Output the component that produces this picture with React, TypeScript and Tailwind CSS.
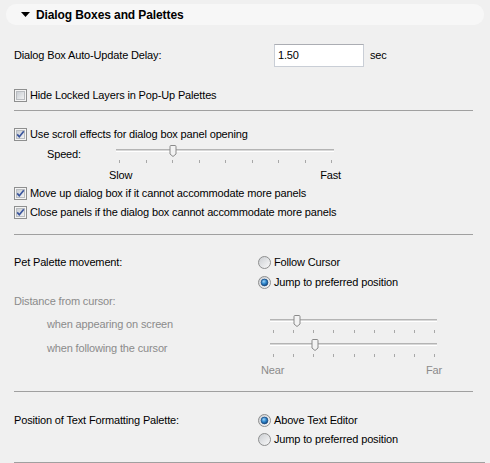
import React from 'react';

function CheckBox({ checked }: { checked?: boolean }) {
  return (
    <svg width="13" height="13" viewBox="0 0 13 13" className="shrink-0">
      <defs>
        <linearGradient id="cbFill" x1="0" y1="0" x2="1" y2="1">
          <stop offset="0" stopColor="#c6cbd1" />
          <stop offset="1" stopColor="#f4f4f4" />
        </linearGradient>
      </defs>
      <rect x="0.5" y="0.5" width="12" height="12" fill="#f4f4f4" stroke="#8e8f8f" />
      <rect x="2.5" y="2.5" width="8" height="8" fill="url(#cbFill)" stroke="#b9bcc0" />
      {checked && (
        <path d="M3.2 6.4 L5.3 8.8 L9.8 3.2" stroke="#3a559d" strokeWidth="1.7" fill="none" />
      )}
    </svg>
  );
}

function Radio({ checked }: { checked?: boolean }) {
  return (
    <svg width="13" height="13" viewBox="0 0 13 13" className="shrink-0">
      <defs>
        <linearGradient id="rdFill" x1="0" y1="0" x2="1" y2="1">
          <stop offset="0" stopColor="#c9ccd0" />
          <stop offset="1" stopColor="#fbfbfb" />
        </linearGradient>
        <radialGradient id="rdDot" cx="0.4" cy="0.35" r="0.7">
          <stop offset="0" stopColor="#9fd3f7" />
          <stop offset="0.5" stopColor="#2d86cc" />
          <stop offset="1" stopColor="#123f73" />
        </radialGradient>
      </defs>
      <circle cx="6.5" cy="6.5" r="6" fill="url(#rdFill)" stroke="#8e8f8f" />
      {checked && <circle cx="6.5" cy="6.5" r="3.4" fill="url(#rdDot)" stroke="#1f4f85" strokeWidth="0.8" />}
    </svg>
  );
}

function Slider({ width, thumb, ticks = 9 }: { width: number; thumb: number; ticks?: number }) {
  const inset = 3;
  const step = (width - inset * 2) / (ticks - 1);
  return (
    <svg width={width} height="19" viewBox={`0 0 ${width} 19`} className="shrink-0">
      <rect x="0" y="4" width={width} height="1" fill="#b4b4b4" />
      <rect x="0" y="5" width={width} height="1" fill="#d8d8d8" />
      <rect x="0" y="6" width={width} height="1" fill="#ffffff" />
      {Array.from({ length: ticks }).map((_, i) => (
        <rect key={i} x={Math.round(inset + i * step)} y="15" width="1" height="3" fill="#a8a8a8" />
      ))}
      <path
        d={`M${thumb - 3} 1.5 Q${thumb - 3} 0.5 ${thumb - 2} 0.5 L${thumb + 2} 0.5 Q${thumb + 3} 0.5 ${thumb + 3} 1.5 L${thumb + 3} 9 L${thumb} 11.5 L${thumb - 3} 9 Z`}
        fill="#f3f3f3"
        stroke="#8a8a8a"
        strokeWidth="1"
      />
    </svg>
  );
}

const Sep = ({ className }: { className: string }) => (
  <div className={`h-px w-[459px] bg-[#a0a0a0] ${className}`} />
);

export default function App() {
  return (
    <div className="w-[490px] h-[463px] bg-[#f0f0f0] overflow-hidden font-['Liberation_Sans',Arial,sans-serif] text-[11px] tracking-[-0.15px] text-black">
      {/* header */}
      <div className="mt-[4px] mx-[6px] h-[21px] rounded-[10px] bg-[#f7f7f7] flex items-center pl-[15px]">
        <svg width="9" height="5" viewBox="0 0 9 5" className="mr-[6px]">
          <path d="M0 0 L9 0 L4.5 5 Z" fill="#000" />
        </svg>
        <span className="font-bold text-[12px] tracking-[-0.1px]">Dialog Boxes and Palettes</span>
      </div>

      <div className="pl-[14px]">
        {/* delay */}
        <div className="mt-[19px] h-[23px] flex items-center">
          <span className="w-[260px]">Dialog Box Auto-Update Delay:</span>
          <div className="w-[90px] h-[23px] bg-white border border-[#c9ced6] border-t-[#abadb3] flex items-center pl-[3px]">
            1.50
          </div>
          <span className="ml-[6px]">sec</span>
        </div>

        <div className="mt-[18px] h-[20px] flex items-center gap-[3px]">
          <CheckBox />
          <span>Hide Locked Layers in Pop-Up Palettes</span>
        </div>

        <Sep className="mt-[5px]" />

        <div className="mt-[13px] h-[20px] flex items-center gap-[3px]">
          <CheckBox checked />
          <span>Use scroll effects for dialog box panel opening</span>
        </div>
        <div className="h-[20px] flex items-center">
          <span className="pl-[33px] w-[102px]">Speed:</span>
          <Slider width={218} thumb={57} />
        </div>
        <div className="mt-[3px] h-[17px] ml-[95px] w-[232px] flex items-center justify-between">
          <span>Slow</span>
          <span>Fast</span>
        </div>
        <div className="h-[19px] flex items-center gap-[3px]">
          <CheckBox checked />
          <span>Move up dialog box if it cannot accommodate more panels</span>
        </div>
        <div className="h-[19px] flex items-center gap-[3px]">
          <CheckBox checked />
          <span>Close panels if the dialog box cannot accommodate more panels</span>
        </div>

        <Sep className="mt-[12px]" />

        {/* pet palette */}
        <div className="mt-[17px] h-[20px] flex items-center">
          <span className="w-[244px]">Pet Palette movement:</span>
          <div className="flex items-center gap-[3px]">
            <Radio />
            <span>Follow Cursor</span>
          </div>
        </div>
        <div className="h-[20px] flex items-center pl-[244px] gap-[3px]">
          <Radio checked />
          <span>Jump to preferred position</span>
        </div>
        <div className="h-[19px] flex items-center text-[#8b8b8b]">Distance from cursor:</div>
        <div className="mt-[3px] h-[20px] flex items-center">
          <span className="pl-[33px] w-[256px] text-[#8b8b8b]">when appearing on screen</span>
          <Slider width={167} thumb={27} />
        </div>
        <div className="mt-[4px] h-[20px] flex items-center">
          <span className="pl-[33px] w-[256px] text-[#8b8b8b]">when following the cursor</span>
          <Slider width={167} thumb={45} />
        </div>
        <div className="mt-[3px] h-[18px] ml-[247px] w-[181px] flex items-center justify-between text-[#8b8b8b]">
          <span>Near</span>
          <span>Far</span>
        </div>

        <Sep className="mt-[12px]" />

        {/* text formatting */}
        <div className="mt-[18px] h-[20px] flex items-center">
          <span className="w-[244px]">Position of Text Formatting Palette:</span>
          <div className="flex items-center gap-[3px]">
            <Radio checked />
            <span>Above Text Editor</span>
          </div>
        </div>
        <div className="h-[19px] flex items-center pl-[244px] gap-[3px]">
          <Radio />
          <span>Jump to preferred position</span>
        </div>

        <div className="mt-[13px] h-px w-[471px] bg-[#a0a0a0]" />
      </div>
    </div>
  );
}
